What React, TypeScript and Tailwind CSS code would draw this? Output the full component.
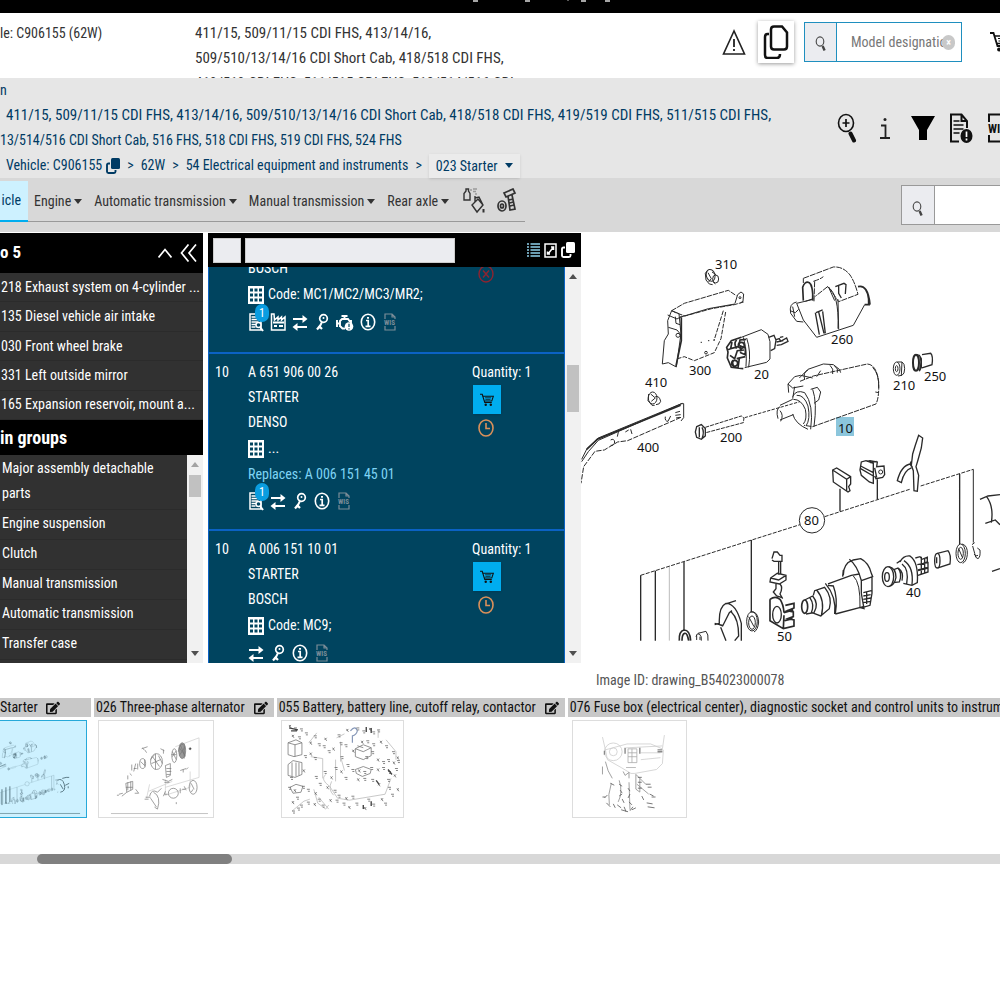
import React from "react";
import { FaEdit } from "react-icons/fa";

const topFive = [
  "218 Exhaust system on 4-cylinder ...",
  "135 Diesel vehicle air intake",
  "030 Front wheel brake",
  "331 Left outside mirror",
  "165 Expansion reservoir, mount a...",
];

const mainGroups = [
  "Major assembly detachable parts",
  "Engine suspension",
  "Clutch",
  "Manual transmission",
  "Automatic transmission",
  "Transfer case",
];

const menus = [
  "Engine",
  "Automatic transmission",
  "Manual transmission",
  "Rear axle",
];

type IconName = "doc" | "factory" | "swap" | "key" | "engine" | "info" | "wis";

type Part = {
  pos: string;
  number: string;
  name: string;
  brand: string;
  code: string;
  replaces?: string;
  icons: IconName[];
};

const parts: Part[] = [
  {
    pos: "10",
    number: "A 651 906 00 26",
    name: "STARTER",
    brand: "DENSO",
    code: "...",
    replaces: "Replaces: A 006 151 45 01",
    icons: ["doc", "swap", "key", "info", "wis"],
  },
  {
    pos: "10",
    number: "A 006 151 10 01",
    name: "STARTER",
    brand: "BOSCH",
    code: "Code: MC9;",
    icons: ["swap", "key", "info", "wis"],
  },
];

const Caret = () => (
  <svg viewBox="0 0 8 5" className="w-2 h-[5px] shrink-0" fill="currentColor">
    <path d="M0 0h8L4 5z" />
  </svg>
);

const Loupe = () => (
  <svg viewBox="0 0 12 16" className="w-3 h-4" fill="none" stroke="#444">
    <ellipse cx="5" cy="5.5" rx="3.8" ry="4.6" strokeWidth="1.1" />
    <path d="M7.6 10l2 4.4" strokeWidth="2.4" />
  </svg>
);

const Copies = () => (
  <svg viewBox="0 0 14 16" className="w-[14px] h-4" fill="none">
    <path
      d="M4 5.500H2.500Q1 5.500 1 7v6.500Q1 15 2.500 15H8q1.500 0 1.500-1.500V12"
      stroke="currentColor"
      strokeWidth="1.900"
    />
    <path
      d="M6.500 0H12.500Q14 0 14 1.500V9.500Q14 11 12.500 11H6.500Q5 11 5 9.500V1.500Q5 0 6.500 0z"
      fill="currentColor"
    />
  </svg>
);

const CartIcon = ({ className }: { className: string }) => (
  <svg viewBox="0 0 22 22" className={className} fill="none" stroke="#111">
    <path d="M0 2h3.500l4 13h11" strokeWidth="1.800" />
    <path d="M4.500 5H21l-2.500 7.500H7" strokeWidth="1.600" />
    <path d="M8 7.500h9.500M8.500 10h8" strokeWidth="1.200" />
    <circle cx="9" cy="18.500" r="1.900" fill="#111" stroke="none" />
    <circle cx="17" cy="18.500" r="1.900" fill="#111" stroke="none" />
  </svg>
);

const GridIcon = () => (
  <svg viewBox="0 0 16 18" className="w-4 h-[18px] shrink-0">
    <path d="M0 0h16v18H0z" fill="#fff" />
    <path
      d="M2 2.500h3v3H2zM6.500 2.500h3v3h-3zM11 2.500h3v3h-3zM2 7.500h3v3H2zM6.500 7.500h3v3h-3zM11 7.500h3v3h-3zM2 12.500h3v3H2zM6.500 12.500h3v3h-3zM11 12.500h3v3h-3z"
      fill="#00445f"
    />
  </svg>
);

const partIcons: Record<IconName, React.ReactNode> = {
  doc: (
    <svg viewBox="0 0 16 20" className="w-4 h-5" fill="none" stroke="#fff">
      <path d="M13 9V18H2V2h11" strokeWidth="1.500" />
      <path d="M3.500 5h8M3.500 7.500h8M3.500 10h7M3.500 12.500h5M3.500 15h4" strokeWidth="1.400" />
      <circle cx="10.500" cy="13" r="2.500" strokeWidth="1.400" fill="#00445f" />
      <path d="M12 15l3 4" strokeWidth="2" />
    </svg>
  ),
  factory: (
    <svg viewBox="0 0 16 20" className="w-4 h-5" fill="none" stroke="#fff">
      <path d="M1.500 18V2h2.500l.5 6 3.500-3v3l3.500-3v3L15 5v13z" strokeWidth="1.500" />
      <path d="M3 10.500h11M4 14h3M9 14h4" strokeWidth="2" />
    </svg>
  ),
  swap: (
    <svg viewBox="0 0 16 20" className="w-4 h-5" fill="none" stroke="#fff">
      <path d="M1 7h11M4 15h11" strokeWidth="2" />
      <path d="M10.500 3L15.500 7l-5 4zM5.500 11L.5 15l5 4z" fill="#fff" stroke="none" />
    </svg>
  ),
  key: (
    <svg viewBox="0 0 16 20" className="w-4 h-5" fill="none" stroke="#fff">
      <circle cx="9.500" cy="6.500" r="3.800" strokeWidth="1.700" />
      <circle cx="9.500" cy="6" r="1" fill="#fff" stroke="none" />
      <path d="M8 10l-3 6" strokeWidth="2" />
      <path d="M3 17.500l2.500-3 2.500 2.500" strokeWidth="2.200" />
    </svg>
  ),
  engine: (
    <svg viewBox="0 0 18 20" className="w-[18px] h-5" fill="none" stroke="#fff">
      <path d="M5.500 4h6M8.500 4v3M1 8v7M1 11.500h3M4 15V9l2-2h6l1.500 2H15v4" strokeWidth="1.900" />
      <path d="M4 14l2.500 2.500H9" strokeWidth="1.900" />
      <circle cx="13" cy="14.500" r="4.300" fill="#fff" stroke="none" />
      <path d="M13 11.800v3.200M13 16.200v1.300" stroke="#00445f" strokeWidth="1.200" />
    </svg>
  ),
  info: (
    <svg viewBox="0 0 16 20" className="w-4 h-5" fill="none" stroke="#fff">
      <ellipse cx="8" cy="10" rx="6.700" ry="7.800" strokeWidth="1.600" />
      <path d="M6 8.500h2.200V14M5.500 14.300h5" strokeWidth="1.700" />
      <path d="M7 5h2v1.800H7z" fill="#fff" stroke="none" />
    </svg>
  ),
  wis: (
    <svg viewBox="0 0 16 20" className="w-4 h-5" fill="none" stroke="#7b8d98">
      <path d="M3 7V2h7l3 3v2M10 2v3h3M3 14v4h10v-4" strokeWidth="1.200" />
      <text x="2" y="13" fontSize="7" fontWeight="700" fill="#7b8d98" stroke="none">
        WIS
      </text>
    </svg>
  ),
};

const IconRow = ({ icons }: { icons: IconName[] }) => (
  <div className="flex h-7 items-center gap-[6px]">
    {icons.map((name) => (
      <button key={name} aria-label={name} className="relative">
        {partIcons[name]}
        {name === "doc" && (
          <span className="absolute -top-2 left-[7px] flex h-[18px] w-[14px] items-center justify-center rounded-full bg-[#0a9de0] text-[12px] text-white">
            1
          </span>
        )}
      </button>
    ))}
  </div>
);

const ScrollArrow = ({ down, color }: { down?: boolean; color: string }) => (
  <svg viewBox="0 0 8 5" className="h-[5px] w-2" fill={color}>
    <path d={down ? "M0 0h8L4 5z" : "M0 5h8L4 0z"} />
  </svg>
);

const PartRow = ({ part }: { part: Part }) => (
  <li className="flex border-b-2 border-[#0b62c4] pt-[6px] pb-[14px] pl-[6px] leading-[25px]">
    <span className="w-[33px] shrink-0">{part.pos}</span>
    <div className="flex-1">
      <p>{part.number}</p>
      <p>{part.name}</p>
      <p>{part.brand}</p>
      <p className="flex h-[27px] items-center gap-1">
        <GridIcon />
        {part.code}
      </p>
      {part.replaces && <p className="text-[#7fd4f5]">{part.replaces}</p>}
      <IconRow icons={part.icons} />
    </div>
    <div className="w-[92px] shrink-0">
      <p>Quantity: 1</p>
      <button
        aria-label="Add to cart"
        className="ml-px flex h-[29px] w-7 items-center justify-center bg-[#00adef] shadow"
      >
        <CartIcon className="h-4 w-[14px]" />
      </button>
      <svg viewBox="0 0 16 18" className="mt-[5px] ml-[6px] h-[18px] w-4" fill="none" stroke="#d9905a">
        <ellipse cx="8" cy="9" rx="7" ry="8" strokeWidth="1.600" />
        <path d="M8 4v5.500h4" strokeWidth="1.600" />
      </svg>
    </div>
  </li>
);

// starter motor assembly, upper half
const StarterUpper = () => (
  <>
    <g transform="translate(580 240) scale(.3333)" strokeWidth="3">
      <ellipse cx="392" cy="106" rx="13" ry="18" transform="rotate(-15 392 106)" />
      <path d="M382 92l-6 8 2 20 10 12 10 2M396 96l12 8M398 124l8 8M384 98l10 18-8 10" />
      <ellipse cx="407" cy="117" rx="9" ry="12" />
      <path d="M275 212l38-22 132-39 24 16M275 212l12 6 28 10 80-22 68-12 28-8" strokeDasharray="16 3" />
      <path d="M300 232l85-26 80-14M465 190l8-26 10-8 8 6-2 22-8 5" />
      <circle cx="480" cy="173" r="3" />
      <path d="M275 212l-12 30 2 40-12 20-6 70 18-4 24 13 14-100-6-60zM265 262l26 8 10 12 2 16M263 225l28 12 14-8M286 230l2 20 12 4" />
      <path d="M304 232v70l-16 76" strokeWidth="5" />
      <circle cx="294" cy="286" r="6" />
      <path d="M430 212l-28 90M437 216l-14 80-20 42-60 24-30-12-20 6" strokeDasharray="14 4" />
      <circle cx="378" cy="338" r="4" />
      <path d="M362 307h4M384 302h4M400 300h5" />
      <path d="M484 292l60-23 20 14 6 22v52l-10 10-66 16M500 294q14 40 6 88M490 292q12 40 8 88" />
      <path d="M484 292l-30 10-14 20 4 14-2 18 12 28 36 4M456 306l-4 20-10 4M452 326l24-6 4-20 18-2M470 300q-10 10 0 26M450 346l14 10 8-24 20-2M470 356l26-6M460 360q-6 14 6 24M478 356l-4 28M482 318l14 6v20l-14-6z" strokeWidth="5" />
      <circle cx="484" cy="316" r="9" strokeWidth="5" />
      <circle cx="464" cy="370" r="9" strokeWidth="5" />
      <path d="M566 292l16-6 6 14-4 26-12 6M586 300l12-4 4 8 18-10 4 10-20 10-14 2M590 306l20-4M600 292l10-2" strokeWidth="4" />
      <ellipse cx="218" cy="474" rx="13" ry="18" />
      <path d="M206 462l-2 20 12 14 8 0M212 462l14 12-12 10" />
      <path d="M226 470q12-4 16 14-2 10-14 10" />
      <path d="M303 532l-160 70-30 4-40 24-28 4-34 46-8 50" strokeDasharray="16 4" />
      <path d="M5 665l20-30 30-34 250-110h6v42l-8 10M5 658l16-32 34-32 252-104" />
      <path d="M20 628l32-30 250-102" strokeWidth="5" />
      <path d="M92 600q10-6 12 6-2 12-12 10M256 530q-2 14 8 14l8-16M286 518l14-4M286 526l16-2M288 534l12-2M112 590l4-18M136 576l10-6M152 568l4 14" />
      <path d="M350 560l14-6 12 12v22l-12 10-14-6-4-16zM358 562v30M366 562q8 14 0 34" strokeWidth="4" />
      <path d="M376 562l108-34 8 6-2 14-112 30" strokeDasharray="12 3" />
      <path d="M494 533L660 485" strokeDasharray="10 4" />
    </g>
    <g transform="translate(780 240) scale(.3333)" strokeWidth="3">
      <path d="M70 115l90-34q30-2 50 24 14 20 24 58l-58 22-32-46-38 30M70 115v14M104 124l-2 60M100 124q20-6 30-14" strokeDasharray="18 3" />
      <path d="M70 182l-2-40q6-20 20-14 12 10 10 54M92 132q8 20 6 48" strokeWidth="5" />
      <path d="M76 184l24-8M142 140q36 20 32 126M50 186q-24 4-18 34l18 24 20 2M50 190l20 50 40 52 110-36 34-62M50 190l50-12M176 268l-2-90M146 142l18 40" />
      <path d="M166 140l26-10 6 4-2 28M176 134v26l8 14M106 218l12 66M116 216l16 64M128 214l8 66M108 218l20-8" strokeWidth="4" />
      <path d="M234 140q30-8 36 54M248 140q20 14 18 54M254 194h16" strokeWidth="5" />
      <path d="M30 212l16 6 10-10M38 200l6 30" />
      <path d="M60 424l40-16 162-36q28 2 34 54 2 46-8 66l-190 68-26-4" strokeDasharray="16 3" />
      <path d="M58 414l26-26 46-16 30 2 18 14 4 10M84 390q-16 8-10 28M150 376q12 10 8 26M164 378q12 8 8 20M110 410l12-18" />
      <path d="M26 458l-2-26 20-22 18-4 36 8M24 432l14 12 32-6M92 448l20-6 10 14-6 24-14 10M98 448q14 40 4 112" />
      <path d="M38 470q10-22 36-12 28 36 18 110M50 466q22-2 34 32 8 40-6 60M40 478q24 0 36 30 6 30-6 44M38 522q8 30 46 46M44 440l-6 36M0 496l38-18M0 540l40-16M0 512q12 14 2 32M0 500q-14 8-6 36" />
      <path d="M278 382q20 20 18 62M286 456l10 2" />
      <ellipse cx="350" cy="386" rx="10" ry="20" />
      <ellipse cx="350" cy="386" rx="4" ry="9" />
      <path d="M352 366h14q8 4 8 20t-8 20l-12 2M366 366l-2 40" />
      <ellipse cx="408" cy="368" rx="9" ry="24" strokeWidth="6" />
      <path d="M408 344l10 2 6 10v26l-6 12M418 346q10 20 0 46M426 344l26-4q8 8 4 34l-30 10" strokeWidth="4" />
      <path d="M158 690l12-6 42 26v22l-6 8 4 12-6 4-44-30zM158 690l42 28 12-8M200 718v34" strokeWidth="4" />
      <path d="M240 690l4-24 14-4 22 8v60l-12-4-24-20zM242 678l38 20M242 686l38 22M260 664l10-2 22 4-2 14 22-2 2 26-6 8-20 4-4-8M284 684l6 28M270 668l20-4" strokeWidth="4" />
      <circle cx="302" cy="696" r="6" />
      <path d="M416 586l12 8-4 30-10 36-6 20 8 26-4 48-10-2-2-60-6-16 4-34 8-26zM394 664q-8 10 4 18M392 672q-28 4-40 50l12 6q8-36 30-44" strokeWidth="4" />
    </g>
  </>
);

// exploded gear train, lower half
const StarterLower = () => (
  <>
    <g transform="translate(620 490) scale(.3333)" strokeWidth="3">
      <path d="M62 256l478-152" strokeDasharray="12 4" />
      <path d="M62 256v196M106 242v210M192 216v204M394 150v216" strokeWidth="4" />
      <path d="M148 230v222" strokeWidth="2" stroke="#999" />
      <path d="M178 452q-2-28 14-32 18 0 20 32M186 452q0-20 8-22t12 22" strokeWidth="5" />
      <path d="M228 440q2-12 10-8 8 6 6 20M234 430l24-6q8 8 6 28M230 436v14M240 440v10" />
      <path d="M284 404l14-4q-2-50 20-60 30 0 46 60v52M298 404l10 4 20-40 8-6M318 342l30-10M284 400l24 6M302 412l16 40M334 366q22 20 22 72l-12 14" strokeWidth="4" />
      <ellipse cx="396" cy="394" rx="16" ry="29" />
      <ellipse cx="396" cy="398" rx="10" ry="20" />
      <path d="M386 380l16 30M392 366q22-4 24 30-2 24-14 30" />
      <path d="M456 206l6-20 10 0 8 10h6v18h-24l-6-4M476 214v40M482 214v40M452 264l20-14 26 6v14l-20 12-28-6zM452 264l24 6 22-14M468 282v14l-8 10 10 12 14 4M480 282q10 10 0 30l8 14" strokeWidth="4" />
      <path d="M450 328q16-12 30 0 10 14 12 40M450 328v64l40 24 32-8v-18l-18-4 16-6v-14l-18-4 20-8v-14l-26 6M492 368l28-8M494 392l24-6M490 416l2-40" strokeWidth="5" />
      <ellipse cx="471" cy="374" rx="13" ry="25" strokeWidth="4" />
      <circle cx="576" cy="91" r="38" strokeWidth="3" />
    </g>
    <g transform="translate(800 430) scale(.3333)" strokeWidth="3">
      <path d="M74 260l255-82M362 168l158-50" strokeDasharray="12 4" />
      <path d="M120 176v68M232 148v60M479 132v210" strokeWidth="4" />
      <path d="M520 118v220" />
      <ellipse cx="14" cy="530" rx="9" ry="20" strokeWidth="5" />
      <path d="M14 510l24-12q20 24 4 50l-24 4M30 504q14 20 4 44M40 496l4-14 30-10q24 30 14 64l-26 22-26-10M50 480q26 30 14 78M84 466l16 2q14 36 6 84M76 460q34 40 28 92M84 462l70-26 24-4M106 552l84-22" strokeWidth="4" />
      <path d="M130 436q0-36 30-46l22-4q24 12 32 44l4 10-34 12q-12-46-36-64M130 420l-2 20M184 450v40l8 46-14-4M216 440v50l-6 36-26 8M190 488l24-6M190 498l22-4M190 508l22-4M190 518l22-4M200 486v36" strokeWidth="4" />
      <path d="M160 438q22 20 20 94" />
      <ellipse cx="264" cy="440" rx="17" ry="30" strokeWidth="4" />
      <ellipse cx="261" cy="441" rx="7" ry="13" strokeWidth="4" />
      <path d="M266 410q22 4 22 32-4 24-22 28M280 420l14-6q14 16 4 42l-18 2M290 400l12-8" strokeWidth="4" />
      <path d="M300 396q10-20 30-18 26 18 22 80l-16 8-26-6M306 402q22 16 14 60M296 416q16 10 10 36M312 392q30 20 24 72" strokeWidth="4" />
      <path d="M346 384l14-4 6 8 16-6v14l-22 8M352 404l32-6v14l-30 8M354 422l30-8v12l-30 10M364 380v54M374 384v44" strokeWidth="4" />
      <ellipse cx="412" cy="392" rx="8" ry="22" strokeWidth="4" />
      <path d="M412 370l32-8q10 10 6 40l-36 12M410 382v18" strokeWidth="4" />
      <ellipse cx="482" cy="370" rx="14" ry="28" />
      <ellipse cx="482" cy="370" rx="8" ry="18" />
      <path d="M486 342q18 4 16 32-2 20-14 26M476 356l12 28" />
      <path d="M516 344l8-6M518 348l6 22q2 16 10 16 8-4 6-26l-8-6M522 372q6 10 12 4" />
      <path d="M540 208l24-10 36-4M560 200q22 30 14 78M556 280l30-10 14 14M576 424l24-8" strokeWidth="4" />
    </g>
  </>
);

const labels = [
  { text: "310", x: 715, y: 269 },
  { text: "300", x: 689, y: 375 },
  { text: "20", x: 754, y: 379 },
  { text: "410", x: 645, y: 387 },
  { text: "400", x: 637, y: 452 },
  { text: "200", x: 720, y: 442 },
  { text: "260", x: 831, y: 344 },
  { text: "210", x: 893, y: 390 },
  { text: "250", x: 924, y: 381 },
  { text: "10", x: 838, y: 433 },
  { text: "80", x: 804, y: 525 },
  { text: "40", x: 906, y: 597 },
  { text: "50", x: 777, y: 641 },
];

const Drawing = () => (
  <svg viewBox="581 233 420 408" className="h-[408px] w-[420px]" fill="none" stroke="#2a2a2a">
    <rect x="836" y="417" width="18" height="19" fill="#8cc6dc" stroke="none" />
    <StarterUpper />
    <StarterLower />
    <g fill="#111" stroke="none" fontSize="13" className="font-['Noto_Sans',sans-serif]">
      {labels.map((l) => (
        <text key={l.text} x={l.x} y={l.y}>
          {l.text}
        </text>
      ))}
    </g>
  </svg>
);

const StarterThumb = () => (
  <svg viewBox="0 721 87 97" className="h-full w-[86px]" fill="none" stroke="#2d4a55">
    <g transform="translate(-109 696) scale(.168 .17)" strokeWidth="2">
      <StarterUpper />
      <StarterLower />
    </g>
    <g strokeWidth=".7">
      <path d="M58 781q5-3 7 4t-4 8M63 779l4-1M66 786l4-2M67 778h3M69 787v2M61 785l3 5" />
      <path d="M2 790v16M6 788v16M10 787v16" />
    </g>
    <path d="M0 814.500h81" stroke="#7fa3ae" />
  </svg>
);

const AlternatorThumb = () => (
  <svg viewBox="98 721 115 97" className="h-full w-[114px]" fill="none" stroke="#777" strokeWidth=".7">
    <path d="M175 747l24-9v40l-34 10M172 782l-24 10M149 785l-3 14M190 772v16l-25 8v-16" stroke="#ccc" />
    <ellipse cx="182" cy="751" rx="3.500" ry="8" fill="#999" />
    <path d="M178 752q2-9 5-7M180 745l5 12M179 748l6 8M184 744v15M179 756l6-9" />
    <ellipse cx="174" cy="756" rx="2.500" ry="7" />
    <path d="M172 752l4 8M172 757l4-6M171 755h5" />
    <circle cx="190" cy="749" r="1" fill="#333" />
    <ellipse cx="156" cy="762" rx="6" ry="8" />
    <path d="M152 757l7 10M151 764l9-4M155 754v16M150 760l4-5M158 756l4 8" />
    <path d="M165 766l5-2v12l-4 2zM166 769h5M166 772h5M166 775h4M162 780l6 2 4-2M164 783h5" />
    <ellipse cx="142" cy="764" rx="3" ry="5" />
    <path d="M140 762l4 4M144 760v7M135 764l-2 8M131 765v6M137 764v6M133 769h3" />
    <path d="M143 750l-1-2M141 749l6-2M146 753l-2-3M160 749l4 2M163 750v4" />
    <path d="M125 784l7-2v8l-6 3zM127 783v8M130 782v9M125 788h7M118 795l4-1M121 797l5-4M135 790l3 4M134 794h4M116 796h2M127 776v4M129 774l2 2" />
    <path d="M149 797q2-8 8-4l4-4M150 799l6 9M153 793q8 4 4 17l-3-2M144 800h4M145 798h5" />
    <circle cx="173" cy="794" r="5" />
    <path d="M165 792l-2 5M164 795h3M180 789v5M184 787l2 4M182 790h3" />
    <ellipse cx="193" cy="788" rx="4" ry="7" />
    <path d="M191 784l3 6M193 790l-2 3M180 771l6-2M183 770v3M186 770l2-2M176 803v2" />
    <path d="M110 814.500h98" stroke="#aaa" />
  </svg>
);

// small callouts scattered over the battery plate
const batteryMarks = [
  [288, 726], [294, 728], [300, 729], [291, 736], [298, 737], [305, 733], [309, 743], [314, 736], [318, 744],
  [324, 739], [323, 746], [338, 735], [346, 730], [357, 728], [363, 731], [369, 729], [373, 732], [378, 730],
  [361, 742], [367, 741], [373, 744], [380, 742], [386, 746], [393, 752], [397, 758], [372, 752], [366, 757],
  [377, 760], [383, 762], [388, 760], [393, 763], [398, 761], [304, 756], [309, 754], [314, 758], [328, 751],
  [332, 749], [340, 743], [345, 745], [352, 751], [341, 757], [347, 765], [340, 772], [335, 768], [324, 772],
  [330, 778], [345, 778], [352, 770], [358, 771], [364, 772], [371, 768], [377, 770], [383, 768], [389, 772],
  [394, 776], [396, 769], [388, 780], [378, 785], [372, 780], [364, 779], [357, 780], [315, 777], [319, 784],
  [326, 788], [334, 791], [338, 796], [345, 799], [352, 797], [356, 804], [348, 808], [343, 804], [336, 801],
  [329, 801], [322, 806], [318, 800], [314, 794], [307, 790], [302, 787], [293, 791], [288, 788], [296, 798],
  [291, 803], [300, 806], [307, 803], [313, 805], [292, 812], [297, 809], [364, 809], [368, 800], [373, 805],
  [381, 800], [385, 804], [392, 795], [397, 790], [389, 788], [290, 778], [302, 771],
];

const BatteryThumb = () => (
  <svg viewBox="281 721 122 97" className="h-full w-[121px]" fill="none" stroke="#777" strokeWidth=".8">
    <path d="M287 743l8-3 6 3v12l-8 2-6-2zM287 743l7 2 7-2M294 745v12M287 765l5-4 9 2v12l-7 3-7-2zM291 763v14M295 763v14M298 763v13" />
    <path d="M355 749l8-4 8 3v8l-8 4-8-3zM355 749l8 3 8-4M357 746l6 2M355 770l8-3 8 3-1 4-8 3-6-3zM289 788l6-3 7 2-2 6-8 1z" />
    <path d="M310 757l12 2v20M325 775q-6 5 4 12l8 12 12 2 36-6 6-16M335 760v22M340 742v20M313 790l4 14 8 6 3-4M318 798l10 12M336 738l8-4M291 812l12-10 6-2M386 740l10 12v8M316 733l-8 10M340 757l4 14M378 730v8M331 782q-4 8 2 14" stroke="#bbb" />
    <path d="M350 731q5-6 7 0-1 4-5 5v7" stroke="#8798b8" strokeWidth="1.200" />
    {batteryMarks.map(([x, y], i) => (
      <path key={i} d={i % 3 ? `M${x - 1} ${y}h3M${x} ${y + 2}h2` : `M${x} ${y - 1}l2 3M${x + 2} ${y - 1}l-2 2`} stroke="#666" />
    ))}
    <path d="M288 728l9 2M290 731h6M366 727v5M371 728v5M363 806v4M371 802v5M376 781l3 4M388 770l4 5" stroke="#444" strokeWidth="1.400" />
  </svg>
);

const FuseBoxThumb = () => (
  <svg viewBox="576 721 115 97" className="h-full w-[113px]" fill="none" stroke="#ccc" strokeWidth=".8">
    <path d="M606 737l3 13 22-6h24l12 5 2-14M609 750l2 10 14 8 10 6h4l22-4 6-6 1-14M630 748l37-2M645 753h20M645 760l20-2" />
    <circle cx="617" cy="752" r="9" />
    <circle cx="617" cy="752" r="4" />
    <path d="M632 749h9v14h-9zM632 753h9M632 757h9M636 749v14M630 768h10" stroke="#aaa" />
    <path d="M629 748v6M644 748v6M662 750h5M662 752h5M608 751v4" stroke="#888" strokeWidth="1.400" />
    <path d="M609 762q2 10 7 17M606 767v8M615 784q-4 12-2 22M623 781q4 12-1 22M633 783l1 28M629 776l4-3v6M640 775l4 4v14l-4-3zM641 785l12 10M644 779l6 6M627 772l2 4" stroke="#888" />
    <path d="M623 785l3 2M624 791l2 3M623 797l3-2M626 800l2 4M621 806l4 3M632 789l2 3M634 795l-2 4M633 803l3 3M637 808l-3 4M642 778h4M642 783h4M642 789h4M650 785h5M652 788h4M654 795l4 2M656 798h4M651 804l6 1M652 808l7 1M646 797l2 4M611 796l-3 3M610 804l4 4M617 805l2 4M614 784l4 2M625 811l7 2M628 808l2 5M636 811l4-2M606 798h3" stroke="#555" />
  </svg>
);

const plates = [
  { title: "Starter", thumb: <StarterThumb />, active: true },
  { title: "026 Three-phase alternator", thumb: <AlternatorThumb /> },
  { title: "055 Battery, battery line, cutoff relay, contactor", thumb: <BatteryThumb /> },
  {
    title: "076 Fuse box (electrical center), diagnostic socket and control units to instruments",
    thumb: <FuseBoxThumb />,
  },
];

const App = () => {
  return (
    <div className="min-h-screen overflow-x-hidden bg-white font-['Roboto_Condensed',Roboto,sans-serif] text-[14px] text-[#333]">
      <div className="h-[13px] bg-black">
        <svg viewBox="0 0 140 3" className="ml-[471px] h-[3px] w-[140px]" fill="none" stroke="#ddd" strokeWidth="1.500">
          <path d="M2 1h5M54 1h5M110 1h5M134 1h5" />
          <path d="M96 0h2" stroke="#777" />
        </svg>
      </div>

      <header className="flex h-[65px] items-start overflow-hidden leading-[25px]">
        <p className="mt-2 w-[195px] shrink-0">le: C906155 (62W)</p>
        <p className="mt-2 w-[320px] shrink-0 text-[15px]">
          411/15, 509/11/15 CDI FHS, 413/14/16,
          <br />
          509/510/13/14/16 CDI Short Cab, 418/518 CDI FHS,
          <br />
          419/519 CDI FHS, 511/515 CDI FHS, 513/514/516 CDI
        </p>
        <div className="mt-2 ml-auto flex h-[42px] shrink-0 items-center">
          <svg viewBox="0 0 24 26" className="h-[26px] w-6" fill="none" stroke="#222">
            <path d="M12 2L1.500 25h21z" strokeWidth="1.600" />
            <path d="M12 10v8M12 20v2" strokeWidth="1.800" />
          </svg>
          <button
            aria-label="Copy"
            className="ml-3 flex h-[42px] w-9 items-center justify-center bg-white shadow-[0_1px_4px_rgba(0,0,0,0.4)]"
          >
            <svg viewBox="0 0 26 34" className="h-[34px] w-[26px]" fill="none" stroke="#111" strokeWidth="2.500">
              <path d="M11 1.500h8l5 6v14q0 3-3 3H11q-3 0-3-3v-17q0-3 3-3z" />
              <path d="M6 9H4.500Q2 9 2 12v18q0 3 2.500 3H14q3 0 3-4" />
            </svg>
          </button>
          <div className="relative ml-[10px] flex h-10 w-[158px] border border-[#1f8fbf]">
            <button
              aria-label="Search"
              className="flex w-8 shrink-0 items-center justify-center border-r border-[#1f8fbf] bg-[#ebecf0] pt-1"
            >
              <Loupe />
            </button>
            <input
              aria-label="Model designation"
              placeholder="Model designation"
              className="w-full min-w-0 bg-white pr-4 pl-[14px] text-[14px] outline-none placeholder:text-[#777]"
            />
            <button
              aria-label="Clear"
              className="absolute top-3 right-[6px] flex h-[15px] w-[13px] items-center justify-center rounded-full bg-[#c8c8c8] text-[10px] leading-none font-bold text-white"
            >
              ×
            </button>
          </div>
          <div className="ml-7 w-[10px] overflow-hidden">
            <CartIcon className="h-[22px] w-[22px] max-w-none" />
          </div>
        </div>
      </header>

      <nav className="flex bg-[#e6e6e6] text-[#003b64]">
        <div className="flex-1 leading-[25px] whitespace-nowrap">
          <p>n</p>
          <p className="pl-[6px] text-[15px]">
            411/15, 509/11/15 CDI FHS, 413/14/16, 509/510/13/14/16 CDI Short Cab, 418/518 CDI FHS, 419/519 CDI FHS, 511/515 CDI FHS,
          </p>
          <p>13/514/516 CDI Short Cab, 516 FHS, 518 CDI FHS, 519 CDI FHS, 524 FHS</p>
          <div className="flex h-[25px] items-center gap-[7px] pl-[6px]">
            <a href="#vehicle" className="flex items-center gap-1">
              Vehicle: C906155 <Copies />
            </a>
            <span>&gt;</span>
            <a href="#62w">62W</a>
            <span>&gt;</span>
            <a href="#54">54 Electrical equipment and instruments</a>
            <span>&gt;</span>
            <div className="relative flex items-center bg-[#ebebeb] shadow">
              <select aria-label="Subgroup" className="h-6 w-[91px] appearance-none pl-[7px] outline-none">
                <option>023 Starter</option>
              </select>
              <span className="pointer-events-none absolute right-[7px]">
                <Caret />
              </span>
            </div>
          </div>
        </div>
        <div className="flex w-[172px] shrink-0 items-center overflow-hidden">
          <button aria-label="Zoom in" className="flex w-[38px] shrink-0 justify-center">
            <svg viewBox="0 0 20 30" className="h-[30px] w-5" fill="none" stroke="#111">
              <ellipse cx="9" cy="10" rx="7.500" ry="8.500" strokeWidth="1.600" />
              <path d="M5.500 10h7M9 6v8" strokeWidth="1.700" />
              <path d="M13.500 20.500l3.500 7" strokeWidth="4" strokeLinecap="round" />
            </svg>
          </button>
          <button aria-label="Info" className="flex w-[38px] shrink-0 justify-center">
            <svg viewBox="0 0 10 22" className="h-[22px] w-[10px]" fill="none" stroke="#222">
              <path d="M1 8.500h4.500V21M0 21h10" strokeWidth="1.800" />
              <circle cx="5" cy="2.500" r="1.500" fill="#222" stroke="none" />
            </svg>
          </button>
          <button aria-label="Filter" className="flex w-[38px] shrink-0 justify-center">
            <svg viewBox="0 0 24 24" className="h-6 w-6">
              <path d="M0 0h24l-8 14v10H8V14z" />
            </svg>
          </button>
          <button aria-label="Notes" className="flex w-[38px] shrink-0 justify-center">
            <svg viewBox="0 0 24 30" className="h-[30px] w-6" fill="none" stroke="#111">
              <path d="M10 28.500H2v-27h10.500L18 8v7M12.500 1.500V8H18" strokeWidth="2" />
              <path d="M4.500 8h6M4.500 12h10M4.500 16h10M4.500 20h6" strokeWidth="1.700" />
              <ellipse cx="17.500" cy="23" rx="6" ry="7" fill="#111" stroke="none" />
              <path d="M17.500 18.500v5.500M17.500 25.500v2" stroke="#fff" strokeWidth="1.700" />
            </svg>
          </button>
          <button aria-label="WIS" className="flex w-[38px] shrink-0 justify-center">
            <svg viewBox="0 0 24 30" className="h-[30px] w-6" fill="none" stroke="#111">
              <path d="M2 9V1.500h14L22 8v1M2 22v6.500h20V22" strokeWidth="2" />
              <text x="1" y="20" fontSize="12" fontWeight="700" fill="#111" stroke="none">
                WIS
              </text>
            </svg>
          </button>
        </div>
      </nav>

      <div className="flex h-[54px] items-start bg-[#d8d8d8]">
        <div className="mt-[3px] flex h-[41px] items-center border-b border-[#999] pr-2">
          <button className="h-[41px] w-7 border-b-2 border-[#00adef] bg-[#cdf1ff] pr-[7px] text-right text-[#003b64]">
            icle
          </button>
          {menus.map((m) => (
            <button key={m} className="flex items-center gap-[3px] px-[6px]">
              {m}
              <Caret />
            </button>
          ))}
          <button aria-label="Fluids" className="ml-2">
            <svg viewBox="0 0 22 26" className="h-[26px] w-[22px]" fill="none" stroke="#333" strokeWidth="1.400">
              <path d="M1 12V5.500L3 3V1h2.500v2L7 5.500V12z" />
              <path d="M7 2h2M10 1h4M10 3.500h3M12 6h2" stroke="#999" />
              <path d="M9 17l6-6 5 6-6 7zM12 8v6M12 10l4-1 4 8" />
              <path d="M20.500 21v3.500" strokeWidth="2" />
            </svg>
          </button>
          <button aria-label="Standard parts" className="ml-3">
            <svg viewBox="0 0 20 26" className="h-[26px] w-5" fill="none" stroke="#333" strokeWidth="1.700">
              <ellipse cx="5" cy="18" rx="4" ry="5" />
              <ellipse cx="5" cy="18" rx="1.500" ry="2" />
              <path d="M7 5l9-4 2 4-9 4zM11 8l2 14 5-1-3-14M12 12l4-1M12.500 15l4-1M13 18l4-1" />
            </svg>
          </button>
        </div>
        <div className="mt-[7px] ml-auto flex h-10 w-[99px] shrink-0 border border-r-0 border-[#999]">
          <button
            aria-label="Search parts"
            className="flex w-[33px] shrink-0 items-center justify-center border-r border-[#999] bg-[#ebecf0] pt-2"
          >
            <Loupe />
          </button>
          <input aria-label="Search parts" className="w-full min-w-0 bg-white outline-none" />
        </div>
      </div>

      <main className="flex items-start">
        <aside className="mt-px flex h-[430px] w-[203px] shrink-0 flex-col bg-[#313131] text-white">
          <div className="flex h-10 shrink-0 items-center bg-black pr-[6px]">
            <h2 className="text-[17px] font-bold">o 5</h2>
            <button aria-label="Collapse" className="ml-auto">
              <svg viewBox="0 0 14 10" className="h-[10px] w-[14px]" fill="none" stroke="#fff" strokeWidth="1.700">
                <path d="M.5 9.500L7 1.500l6.500 8" />
              </svg>
            </button>
            <button aria-label="Hide panel" className="ml-2">
              <svg viewBox="0 0 17 18" className="h-[18px] w-[17px]" fill="none" stroke="#fff" strokeWidth="1.700">
                <path d="M8.500.5L1.500 9l7 8.500M16 .5L9 9l7 8.500" />
              </svg>
            </button>
          </div>
          <ul className="flex h-[147px] shrink-0 flex-col">
            {topFive.map((t) => (
              <li key={t} className="flex flex-1 items-center border-b border-[#2b2b2b] pl-px whitespace-nowrap">
                {t}
              </li>
            ))}
          </ul>
          <h2 className="flex h-[35px] shrink-0 items-center bg-black text-[18px] font-bold">in groups</h2>
          <div className="flex min-h-0 flex-1">
            <ul className="flex-1 leading-[25px]">
              {mainGroups.map((g) => (
                <li key={g} className="border-b border-[#2b2b2b] pt-px pr-4 pb-[3px] pl-[2px]">
                  {g}
                </li>
              ))}
            </ul>
            <div className="flex w-4 flex-col items-center bg-[#f1f1f1] py-[7px]">
              <ScrollArrow color="#a3a3a3" />
              <div className="mt-2 h-[22px] w-3 bg-[#c1c1c1]" />
              <div className="flex-1" />
              <ScrollArrow down color="#505050" />
            </div>
          </div>
        </aside>

        <section className="mt-px ml-[5px] flex h-[430px] w-[373px] shrink-0 flex-col bg-[#f1f1f1]">
          <div className="flex h-[34px] shrink-0 items-center bg-black pr-[6px] pl-[5px]">
            <input aria-label="Position" className="h-[25px] w-7 border border-[#ccc] bg-[#ebecf0]" />
            <input aria-label="Filter parts" className="ml-1 h-[25px] w-[210px] border border-[#ccc] bg-[#ebecf0]" />
            <div className="ml-auto flex items-center gap-1 text-white">
              <svg viewBox="0 0 13 14" className="h-[14px] w-[13px]" fill="none" stroke="#8fd0ea" strokeWidth="1.600">
                <path d="M0 1h2M3.500 1H13M0 4h2M3.500 4H13M0 7h2M3.500 7H13M0 10h2M3.500 10H13M0 13h2M3.500 13H13" />
              </svg>
              <svg viewBox="0 0 13 15" className="h-[15px] w-[13px]" fill="none" stroke="#fff" strokeWidth="1.500">
                <path d="M1 1h11v13H1zM4 11l5.500-7M7 4h2.500v3M3.500 8.500V11H6" />
              </svg>
              <Copies />
            </div>
          </div>
          <div className="flex min-h-0 flex-1">
            <ul className="min-w-0 flex-1 overflow-hidden border-x border-[#0b62c4] bg-[#00445f] text-white">
              <li className="-mt-[11px] flex border-b-2 border-[#0b62c4] pb-4 pl-[39px] leading-[25px]">
                <div className="flex-1">
                  <p>BOSCH</p>
                  <p className="flex h-[27px] items-center gap-1">
                    <GridIcon />
                    Code: MC1/MC2/MC3/MR2;
                  </p>
                  <IconRow icons={["doc", "factory", "swap", "key", "engine", "info", "wis"]} />
                </div>
                <div className="w-[92px] pt-[9px]">
                  <svg viewBox="0 0 16 18" className="ml-[6px] h-[18px] w-4" fill="none" stroke="#8e2430">
                    <ellipse cx="8" cy="9" rx="7" ry="8" strokeWidth="1.400" />
                    <path d="M5 5.500l6 7M11 5.500l-6 7" strokeWidth="1.400" />
                  </svg>
                </div>
              </li>
              {parts.map((p) => (
                <PartRow key={p.number} part={p} />
              ))}
            </ul>
            <div className="flex w-4 flex-col items-center py-[7px]">
              <ScrollArrow color="#505050" />
              <div className="mt-[86px] h-[47px] w-3 bg-[#c1c1c1]" />
              <div className="flex-1" />
              <ScrollArrow down color="#505050" />
            </div>
          </div>
        </section>

        <figure className="mt-px min-w-0 flex-1 overflow-hidden">
          <div className="w-[420px]">
            <Drawing />
          </div>
          <figcaption className="mt-[27px] pl-[15px] leading-[25px] text-[#555]">
            Image ID: drawing_B54023000078
          </figcaption>
        </figure>
      </main>

      <div className="mt-[5px] flex gap-[3px] overflow-hidden text-[#111]">
        {plates.map((p) => (
          <section key={p.title} className={p.active ? "w-[91px] shrink-0" : "shrink-0"}>
            <h3
              className={
                p.active
                  ? "flex h-[19px] items-center gap-2 bg-[#c8c8c8] whitespace-nowrap"
                  : "flex h-[19px] items-center gap-[9px] bg-[#c8c8c8] pr-[6px] pl-[2px] whitespace-nowrap"
              }
            >
              {p.title}
              <FaEdit className="size-[14px]" />
            </h3>
            <button
              aria-label={p.title}
              className={
                p.active
                  ? "mt-[3px] block h-[98px] border border-l-0 border-[#27a9d9] bg-[#cdf1ff]"
                  : "mt-[3px] ml-1 block h-[98px] border border-[#ddd] bg-white"
              }
            >
              {p.thumb}
            </button>
          </section>
        ))}
      </div>

      <div className="mt-9 h-[10px] bg-[#d8d8d8]">
        <div className="ml-[37px] h-[10px] w-[195px] rounded-full bg-[#808080]" />
      </div>
    </div>
  );
};

export default App;
